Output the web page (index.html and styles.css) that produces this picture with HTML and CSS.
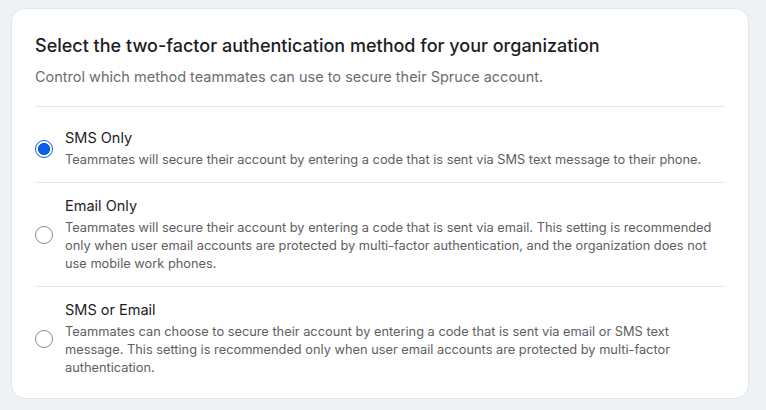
FILE: index.html
```html
<!DOCTYPE html>
<html>
<head>
<meta charset="utf-8">
<link rel="stylesheet" href="styles.css">
</head>
<body>
<div class="card">
  <h1 class="title">Select the two-factor authentication method for your organization</h1>
  <p class="subtitle">Control which method teammates can use to secure their Spruce account.</p>
  <div class="options">
    <label class="option">
      <span class="radio checked"></span>
      <span class="text">
        <span class="label">SMS Only</span>
        <span class="desc">Teammates will secure their account by entering a code that is sent via SMS text message to their phone.</span>
      </span>
    </label>
    <label class="option">
      <span class="radio"></span>
      <span class="text">
        <span class="label">Email Only</span>
        <span class="desc">Teammates will secure their account by entering a code that is sent via email. This setting is recommended only when user email accounts are protected by multi-factor authentication, and the organization does not use mobile work phones.</span>
      </span>
    </label>
    <label class="option">
      <span class="radio"></span>
      <span class="text">
        <span class="label">SMS or Email</span>
        <span class="desc">Teammates can choose to secure their account by entering a code that is sent via email or SMS text message. This setting is recommended only when user email accounts are protected by multi-factor authentication.</span>
      </span>
    </label>
  </div>
</div>
</body>
</html>
```

FILE: styles.css
```css
* { box-sizing: border-box; }
html, body { margin: 0; padding: 0; }
body {
  background: #eff2f5;
  font-family: Inter, "Noto Sans", sans-serif;
  padding: 8px 17px 11px 11px;
}
.card {
  background: #ffffff;
  border: 1px solid #e3e7ec;
  border-radius: 14px;
  padding: 26px 23px 20px 23px;
  height: 391px;
}
.title {
  margin: 0;
  font-size: 18px;
  font-weight: 500;
  line-height: 22px;
  color: #1d1d1f;
  letter-spacing: 0;
}
.subtitle {
  margin: 10px 0 0 0;
  font-size: 14.5px;
  line-height: 20px;
  color: #6c6c70;
  padding-bottom: 19px;
  border-bottom: 1px solid #e6e6e8;
}
.options {
  display: flex;
  flex-direction: column;
  margin-top: 8px;
}
.option {
  display: flex;
  align-items: center;
  gap: 12px;
  padding: 13px 0 13px 0;
  border-bottom: 1px solid #e6e6e8;
}
.option:last-child { border-bottom: none; }
.radio {
  flex: 0 0 18px;
  width: 18px;
  height: 18px;
  border-radius: 50%;
  border: 1px solid #8e8e93;
  background: #fff;
}
.radio.checked {
  border: 1.5px solid #0a5fe8;
  background: radial-gradient(circle, #0a5fe8 0 5.8px, #ffffff 6.3px);
}
.text { display: flex; flex-direction: column; }
.label {
  font-size: 14.5px;
  line-height: 20px;
  color: #1d1d1f;
}
.desc {
  margin-top: 3px;
  font-size: 12.8px;
  line-height: 18px;
  color: #5e5e62;
}
```
